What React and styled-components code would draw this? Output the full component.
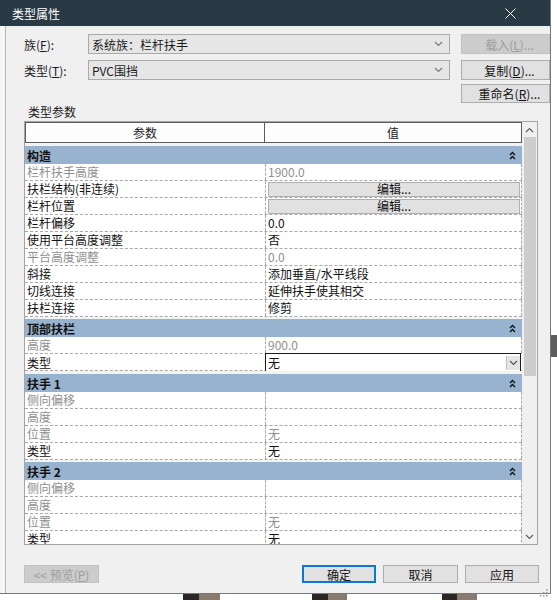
import React from "react";
import styled, { createGlobalStyle } from "styled-components";

const Global = createGlobalStyle`
  html, body { margin: 0; padding: 0; background: #ffffff; }
  body { font-family: "Noto Sans CJK SC", "Noto Sans", sans-serif; font-size: 12px; color: #000; }
  * { box-sizing: border-box; }
`;

const Page = styled.div`
  display: grid;
  grid-template-columns: 551px 6px;
  grid-template-rows: 594px 6px;
  width: 557px;
  height: 600px;
  overflow: hidden;
`;

const Dialog = styled.div`
  position: relative;
  display: flex;
  flex-direction: column;
  border-right: 1px solid #6f7b85;
  border-bottom: 1px solid #6f7b85;
  background: #f0f0f0;
`;

const TitleBar = styled.div`
  height: 26px;
  flex: none;
  background: #2a3a45;
  color: #ffffff;
  display: flex;
  align-items: center;
  justify-content: space-between;
  padding: 0 34px 0 12px;
  font-size: 12px;
`;

const Body = styled.div`
  flex: 1;
  display: flex;
`;

const Gutter = styled.div`
  width: 6px;
  background: #f6f6f6;
`;

const Panel = styled.div`
  flex: 1;
  border-left: 1px solid #b4b4b4;
  padding: 8px 0 0 18px;
  display: flex;
  flex-direction: column;
`;

const FormGrid = styled.div`
  display: grid;
  grid-template-columns: 53px 362px 89px;
  column-gap: 11px;
  grid-template-rows: 20px 26px 23px;
  align-items: end;
`;

const FieldLabel = styled.div`
  display: flex;
  align-items: center;
  height: 20px;
  color: #1a1a1a;
`;

const Combo = styled.div`
  display: flex;
  align-items: center;
  justify-content: space-between;
  height: 20px;
  border: 1px solid #a9a9a9;
  background: #e6e6e6;
  padding: 0 6px 0 3px;
  color: #1a1a1a;
`;

const Btn = styled.div`
  display: flex;
  align-items: center;
  justify-content: center;
  height: ${(p) => p.$h || 20}px;
  width: ${(p) => (p.$w ? `${p.$w}px` : "auto")};
  border: ${(p) => (p.$primary ? "2px solid #0a78d4" : p.$disabled ? "1px solid #c2c2c2" : "1px solid #adadad")};
  background: ${(p) => (p.$disabled ? "#cccccc" : "#e1e1e1")};
  color: ${(p) => (p.$disabled ? "#9d9d9d" : "#111")};
  padding-left: ${(p) => p.$pl || 0}px;
  font-size: 12px;
  white-space: nowrap;
`;

const SectionLabel = styled.div`
  height: 16px;
  line-height: 16px;
  margin-top: 1px;
  margin-left: 4px;
  margin-bottom: 1px;
  color: #1a1a1a;
`;

const GridFrame = styled.div`
  width: 514px;
  height: 424px;
  flex: none;
  border: 1px solid #a3a3a3;
  display: flex;
  background: #f5f5f5;
`;

const Table = styled.div`
  width: 497px;
  height: 100%;
  overflow: hidden;
  display: flex;
  flex-direction: column;
`;

const HeaderRow = styled.div`
  display: grid;
  grid-template-columns: 240px 257px;
  height: 21px;
  flex: none;
`;

const HeaderCell = styled.div`
  display: flex;
  align-items: center;
  justify-content: center;
  background: #fdfdfd;
  border: 1px solid #5c5c5c;
  border-left: ${(p) => (p.$first ? "1px solid #5c5c5c" : "none")};
  color: #1a1a1a;
`;

const Spacer = styled.div`
  height: ${(p) => p.$h}px;
  flex: none;
  background: #f3f3f3;
`;

const GroupRow = styled.div`
  height: 18px;
  flex: none;
  background: #98b3cf;
  display: flex;
  align-items: center;
  justify-content: space-between;
  padding: 0 6px 0 2px;
  font-weight: bold;
  color: #111;
`;

const Row = styled.div`
  display: grid;
  grid-template-columns: 240px 257px;
  height: 17px;
  flex: none;
  background: #ffffff;
  border-bottom: 1px dashed #a8a8a8;
`;

const Cell = styled.div`
  display: flex;
  align-items: center;
  padding-left: 2px;
  color: ${(p) => (p.$gray ? "#8f8f8f" : "#111")};
  border-left: ${(p) => (p.$value ? "1px dashed #a8a8a8" : "none")};
  border-right: ${(p) => (p.$value ? "1px dashed #a8a8a8" : "none")};
  white-space: nowrap;
  overflow: hidden;
  line-height: 16px;
`;

const CellButton = styled.div`
  flex: 1;
  height: 15px;
  margin: 0 1px 0 0;
  display: flex;
  align-items: center;
  justify-content: center;
  background: #e1e1e1;
  border: 1px solid #b0b0b0;
  color: #111;
`;

const SelectCell = styled.div`
  display: flex;
  align-items: center;
  justify-content: space-between;
  border: 1px solid #1a1a1a;
  margin: -1px 1px -1px 0;
  padding-left: 2px;
  background: #ffffff;
  color: #111;
`;

const SelectArrow = styled.div`
  width: 14px;
  height: 14px;
  background: #e5e5e5;
  border-left: 1px solid #bdbdbd;
  display: flex;
  align-items: center;
  justify-content: center;
`;

const Scrollbar = styled.div`
  width: 15px;
  height: 100%;
  background: #f0f0f0;
  display: flex;
  flex-direction: column;
  align-items: center;
`;

const ScrollArrow = styled.div`
  height: 15px;
  width: 15px;
  flex: none;
  display: flex;
  align-items: center;
  justify-content: center;
`;

const Thumb = styled.div`
  width: 12px;
  height: 239px;
  background: #cdcdcd;
  flex: none;
`;

const ScrollFill = styled.div`
  flex: 1;
`;

const ButtonBar = styled.div`
  margin-top: 20px;
  display: flex;
  width: 515px;
`;

const BarGap = styled.div`
  flex: 1;
`;

const BarButtons = styled.div`
  display: flex;
  gap: 7px;
`;

const Grip = styled.div`
  position: absolute;
  right: 2px;
  bottom: 2px;
  width: 8px;
  height: 8px;
`;

const RightStrip = styled.div`
  display: flex;
  flex-direction: column;
  background: #ffffff;
`;

const StripBlock = styled.div`
  width: ${(p) => p.$w}px;
  height: ${(p) => p.$h}px;
  margin-top: ${(p) => p.$mt || 0}px;
  margin-left: ${(p) => p.$ml || 0}px;
  background: ${(p) => p.$c};
  flex: none;
`;

const BottomStrip = styled.div`
  display: flex;
  background: #ffffff;
`;

const Chevron = ({ color = "#7a7a7a", up }) => (
  <svg width="9" height="6" viewBox="0 0 9 6">
    <path d={up ? "M1 5 L4.5 1.5 L8 5" : "M1 1 L4.5 4.5 L8 1"} fill="none" stroke={color} strokeWidth="1.2" />
  </svg>
);

const Collapse = () => (
  <svg width="7" height="9" viewBox="0 0 7 9">
    <path d="M1 4 L3.5 1.5 L6 4 M1 8 L3.5 5.5 L6 8" fill="none" stroke="#111" strokeWidth="1.4" />
  </svg>
);

const groups = [
  {
    title: "构造",
    before: 3,
    rows: [
      { l: "栏杆扶手高度", lg: true, v: "1900.0", vg: true },
      { l: "扶栏结构(非连续)", v: "编辑...", kind: "button" },
      { l: "栏杆位置", v: "编辑...", kind: "button" },
      { l: "栏杆偏移", v: "0.0" },
      { l: "使用平台高度调整", v: "否" },
      { l: "平台高度调整", lg: true, v: "0.0", vg: true },
      { l: "斜接", v: "添加垂直/水平线段" },
      { l: "切线连接", v: "延伸扶手使其相交" },
      { l: "扶栏连接", v: "修剪" },
    ],
  },
  {
    title: "顶部扶栏",
    before: 2,
    rows: [
      { l: "高度", lg: true, v: "900.0", vg: true },
      { l: "类型", v: "无", kind: "select" },
    ],
  },
  {
    title: "扶手 1",
    before: 3,
    rows: [
      { l: "侧向偏移", lg: true, v: "" },
      { l: "高度", lg: true, v: "" },
      { l: "位置", lg: true, v: "无", vg: true },
      { l: "类型", v: "无" },
    ],
  },
  {
    title: "扶手 2",
    before: 2,
    rows: [
      { l: "侧向偏移", lg: true, v: "" },
      { l: "高度", lg: true, v: "" },
      { l: "位置", lg: true, v: "无", vg: true },
      { l: "类型", v: "无" },
    ],
  },
];

function ValueCell({ r }) {
  if (r.kind === "button") {
    return (
      <Cell $value>
        <CellButton>{r.v}</CellButton>
      </Cell>
    );
  }
  if (r.kind === "select") {
    return (
      <SelectCell>
        {r.v}
        <SelectArrow>
          <Chevron color="#555" />
        </SelectArrow>
      </SelectCell>
    );
  }
  return (
    <Cell $value $gray={r.vg}>
      {r.v}
    </Cell>
  );
}

export default function App() {
  return (
    <>
      <Global />
      <Page>
        <Dialog>
          <TitleBar>
            <span>类型属性</span>
            <svg width="11" height="11" viewBox="0 0 11 11">
              <path d="M0.5 0.5 L10.5 10.5 M10.5 0.5 L0.5 10.5" stroke="#ffffff" strokeWidth="1" />
            </svg>
          </TitleBar>
          <Body>
            <Gutter />
            <Panel>
              <FormGrid>
                <FieldLabel>族(<u>F</u>):</FieldLabel>
                <Combo>
                  <span>系统族：栏杆扶手</span>
                  <Chevron />
                </Combo>
                <Btn $disabled $pl={8}>
                  载入(<u>L</u>)...
                </Btn>
                <FieldLabel>类型(<u>T</u>):</FieldLabel>
                <Combo>
                  <span>PVC围挡</span>
                  <Chevron />
                </Combo>
                <Btn $pl={8}>
                  复制(<u>D</u>)...
                </Btn>
                <span />
                <span />
                <Btn $h={19} $pl={8}>
                  重命名(<u>R</u>)...
                </Btn>
              </FormGrid>
              <SectionLabel>类型参数</SectionLabel>
              <GridFrame>
                <Table>
                  <HeaderRow>
                    <HeaderCell $first>参数</HeaderCell>
                    <HeaderCell>值</HeaderCell>
                  </HeaderRow>
                  {groups.map((g) => (
                    <React.Fragment key={g.title}>
                      <Spacer $h={g.before} />
                      <GroupRow>
                        <span>{g.title}</span>
                        <Collapse />
                      </GroupRow>
                      {g.rows.map((r, i) => (
                        <Row key={i}>
                          <Cell $gray={r.lg}>{r.l}</Cell>
                          <ValueCell r={r} />
                        </Row>
                      ))}
                    </React.Fragment>
                  ))}
                </Table>
                <Scrollbar>
                  <ScrollArrow>
                    <Chevron up color="#606060" />
                  </ScrollArrow>
                  <Thumb />
                  <ScrollFill />
                  <ScrollArrow>
                    <Chevron color="#606060" />
                  </ScrollArrow>
                </Scrollbar>
              </GridFrame>
              <ButtonBar>
                <Btn $disabled $h={18} $w={75}>
                  &lt;&lt; 预览(<u>P</u>)
                </Btn>
                <BarGap />
                <BarButtons>
                  <Btn $primary $h={18} $w={74}>确定</Btn>
                  <Btn $h={18} $w={75}>取消</Btn>
                  <Btn $h={18} $w={74}>应用</Btn>
                </BarButtons>
              </ButtonBar>
            </Panel>
          </Body>
          <Grip>
            <svg width="8" height="8" viewBox="0 0 8 8">
              <rect x="6" y="0" width="1.5" height="1.5" fill="#9a9a9a" />
              <rect x="3" y="3" width="1.5" height="1.5" fill="#9a9a9a" />
              <rect x="6" y="3" width="1.5" height="1.5" fill="#9a9a9a" />
              <rect x="0" y="6" width="1.5" height="1.5" fill="#9a9a9a" />
              <rect x="3" y="6" width="1.5" height="1.5" fill="#9a9a9a" />
              <rect x="6" y="6" width="1.5" height="1.5" fill="#9a9a9a" />
            </svg>
          </Grip>
        </Dialog>
        <RightStrip>
          <StripBlock $w={6} $h={22} $mt={335} $c="#5e5e5e" />
        </RightStrip>
        <BottomStrip>
          <StripBlock $w={16} $h={6} $ml={183} $c="#2b2623" />
          <StripBlock $w={21} $h={6} $c="#8a7a6d" />
          <StripBlock $w={16} $h={6} $ml={92} $c="#2b2623" />
          <StripBlock $w={19} $h={6} $c="#8a7a6d" />
          <StripBlock $w={15} $h={6} $ml={95} $c="#2b2623" />
          <StripBlock $w={20} $h={6} $c="#8a7a6d" />
        </BottomStrip>
      </Page>
    </>
  );
}
